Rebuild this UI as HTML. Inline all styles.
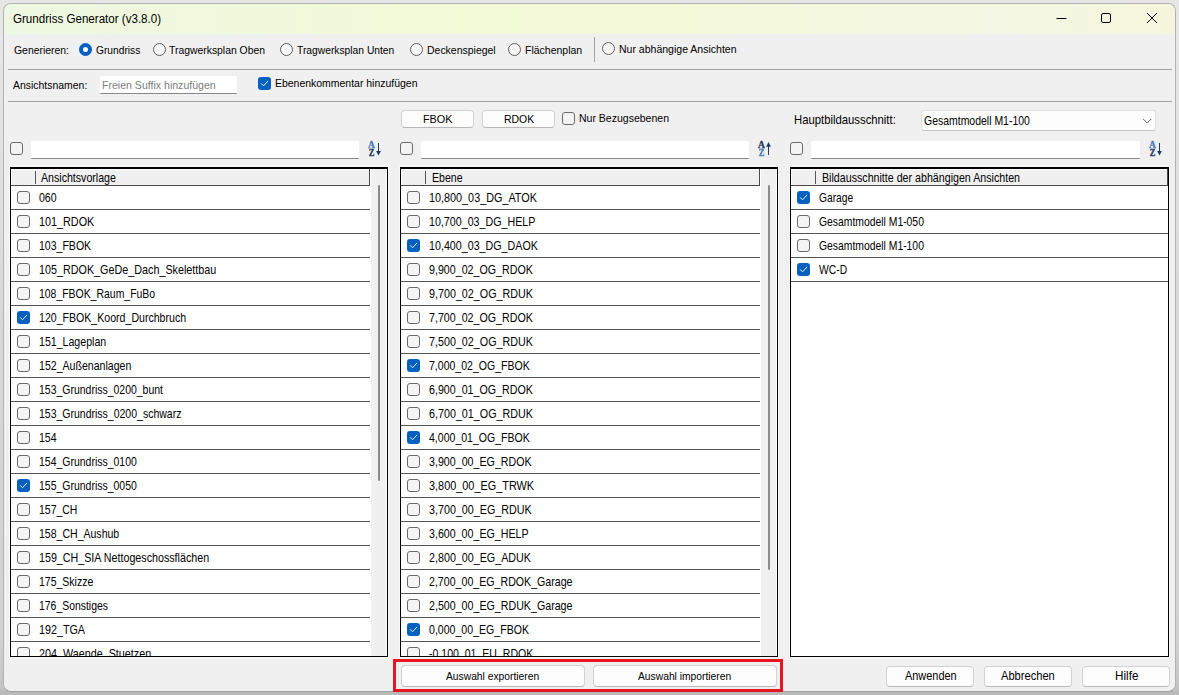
<!DOCTYPE html>
<html lang="de"><head><meta charset="utf-8"><title>Grundriss Generator (v3.8.0)</title>
<style>
html,body{margin:0;padding:0}
body{width:1179px;height:695px;overflow:hidden;position:relative;
 background:linear-gradient(to bottom,#e6e6e6 0,#e7e7e7 40px,#d9d9d9 300px,#d1d1d1 640px,#c4c4c4 688px,#bababa 692px,#bababa 695px);
 font-family:"Liberation Sans",sans-serif}
#win{position:absolute;left:3px;top:3px;width:1171px;height:687px;border:1px solid #b2b2b2;border-bottom-color:#a0a0a0;border-radius:8px;background:#f0f0f0;overflow:hidden}
#tb{position:absolute;left:0;top:0;width:1171px;height:30px;background:linear-gradient(to right,#eef7e1,#f2f9d7 40%,#f3f8d8 55%,#f3f6e2 85%,#f4f6dc)}
#c{position:absolute;left:-4px;top:-4px;width:1179px;height:695px}
.t{position:absolute;white-space:pre;line-height:16px;transform-origin:0 0;display:block}
.hl{position:absolute;height:1px;background:#a0a0a0}
.cb{position:absolute;width:11px;height:11px;border:1px solid #6a6a6a;border-radius:3px;background:#f4f4f4}
.cb.on{width:13px;height:13px;border:0;background:#0560c0}
.cb svg{display:block}
.rd{position:absolute;width:11px;height:11px;border:1px solid #5e5e5e;border-radius:50%;background:#f6f6f6}
.rd.on{width:5px;height:5px;border:4px solid #0560c0;background:#fff}
.inp{position:absolute;background:#fff;border-bottom:1px solid #868686;border-radius:2px 2px 1px 1px;box-sizing:border-box}
.btn{position:absolute;box-sizing:border-box;background:#fdfdfd;border:1px solid #d2d2d2;border-bottom-color:#b8b8b8;border-radius:4px}
.lb{position:absolute;box-sizing:border-box;border:1px solid #000;border-top-width:2px;background:#fff;overflow:hidden;box-shadow:0 0 0 1px #f9f9f9}
.hd{position:absolute;left:0;top:0;height:16px;background:#f0f0f0;border-bottom:1px solid #555;border-right:1px solid #555;box-shadow:inset 1px 1px 0 #fff}
.hs{position:absolute;width:1px;background:#555}
.rl{position:absolute;left:0;height:1px;background:#555}
.sb{position:absolute;background:#f0f0f0}
.th{position:absolute;width:2px;background:#8b8b8b;border-radius:1px}
</style></head><body>
<div id="win"><div id="tb"></div><div id="c">
<svg style="position:absolute;left:1040px;top:4px" width="132" height="30" viewBox="1040 4 132 30"><path d="M1056.5 18.5H1066.5" stroke="#000" stroke-width="1" fill="none"/><rect x="1101.5" y="13.5" width="9" height="9" rx="1.5" fill="none" stroke="#000" stroke-width="1"/><path d="M1147 13L1157 23M1157 13L1147 23" stroke="#000" stroke-width="1" fill="none"/></svg>
<span class="t" style="left:12.60px;top:10.84px;font-size:12.0px;color:#000;transform:scaleX(0.9654);">Grundriss Generator (v3.8.0)</span>
<span class="t" style="left:13.80px;top:42.02px;font-size:11.5px;color:#000;transform:scaleX(0.9056);">Generieren:</span>
<div class="rd on" style="left:79.0px;top:43.3px"></div>
<span class="t" style="left:95.80px;top:42.02px;font-size:11.5px;color:#000;transform:scaleX(0.8885);">Grundriss</span>
<div class="rd" style="left:152.9px;top:43.3px"></div>
<span class="t" style="left:169.40px;top:42.02px;font-size:11.5px;color:#000;transform:scaleX(0.9029);">Tragwerksplan Oben</span>
<div class="rd" style="left:280.1px;top:43.3px"></div>
<span class="t" style="left:297.10px;top:42.02px;font-size:11.5px;color:#000;transform:scaleX(0.8937);">Tragwerksplan Unten</span>
<div class="rd" style="left:409.5px;top:43.3px"></div>
<span class="t" style="left:426.60px;top:42.02px;font-size:11.5px;color:#000;transform:scaleX(0.9107);">Deckenspiegel</span>
<div class="rd" style="left:507.8px;top:43.3px"></div>
<span class="t" style="left:524.60px;top:42.02px;font-size:11.5px;color:#000;transform:scaleX(0.9129);">Flächenplan</span>
<div style="position:absolute;left:594px;top:37px;width:1px;height:25px;background:#a0a0a0"></div>
<div class="rd" style="left:601.6px;top:42.2px"></div>
<span class="t" style="left:619.00px;top:41.02px;font-size:11.5px;color:#000;transform:scaleX(0.9143);">Nur abhängige Ansichten</span>
<div class="hl" style="left:8px;top:69px;width:1164px"></div>
<span class="t" style="left:12.60px;top:76.52px;font-size:11.5px;color:#000;transform:scaleX(0.9080);">Ansichtsnamen:</span>
<div class="inp" style="left:100px;top:76px;width:137px;height:18px"></div>
<span class="t" style="left:101.70px;top:77.02px;font-size:11.5px;color:#7d7d7d;transform:scaleX(0.9183);">Freien Suffix hinzufügen</span>
<div class="cb on" style="left:258px;top:77px"><svg width="13" height="13" viewBox="0 0 13 13"><path d="M3.3 6.6 L5.5 8.8 L9.8 4.2" fill="none" stroke="#fff" stroke-opacity="0.95" stroke-width="0.95" stroke-linecap="round" stroke-linejoin="round"/></svg></div>
<span class="t" style="left:275.20px;top:75.02px;font-size:11.5px;color:#000;transform:scaleX(0.9097);">Ebenenkommentar hinzufügen</span>
<div class="hl" style="left:8px;top:101px;width:1164px"></div>
<div class="btn" style="left:401px;top:110px;width:73px;height:18px"></div>
<span class="t" style="left:423.20px;top:111.02px;font-size:11.5px;color:#000;transform:scaleX(0.9421);">FBOK</span>
<div class="btn" style="left:482px;top:110px;width:73px;height:18px"></div>
<span class="t" style="left:504.40px;top:111.02px;font-size:11.5px;color:#000;transform:scaleX(0.9087);">RDOK</span>
<div class="cb" style="left:562px;top:112px"></div>
<span class="t" style="left:578.90px;top:110.02px;font-size:11.5px;color:#000;transform:scaleX(0.9140);">Nur Bezugsebenen</span>
<span class="t" style="left:793.60px;top:112.03px;font-size:12.6px;color:#000;transform:scaleX(0.8975);">Hauptbildausschnitt:</span>
<div class="inp" style="left:921px;top:110px;width:235px;height:21px;background:#fdfdfd;border:1px solid #e0e0e0;border-bottom-color:#c4c4c4;border-radius:3px"></div>
<span class="t" style="left:924.20px;top:113.03px;font-size:12.6px;color:#000;transform:scaleX(0.8313);">Gesamtmodell M1-100</span>
<svg style="position:absolute;left:1142px;top:118px" width="11" height="7" viewBox="0 0 11 7"><path d="M1.2 1L5.2 5L9.2 1" fill="none" stroke="#505050" stroke-width="0.9"/></svg>
<div class="cb" style="left:10px;top:142px"></div>
<div class="inp" style="left:31px;top:141px;width:328px;height:17.5px"></div>
<svg style="position:absolute;left:367px;top:141px;overflow:visible" width="15" height="16" viewBox="0 0 15 16"><text x="1.0" y="6.9" font-family="Liberation Serif,serif" font-weight="bold" font-size="9.6" fill="#4a7ab5" stroke="#4a7ab5" stroke-width="0.3">A</text><text transform="translate(1.8,14.8) scale(0.88,1)" font-family="Liberation Serif,serif" font-weight="bold" font-size="9.6" fill="#1f3864" stroke="#1f3864" stroke-width="0.3">Z</text><path d="M11.5 2V12" stroke="#1f3864" stroke-width="1"/><path d="M9.1 10L11.5 14.4L13.9 10Z" fill="#1f3864"/></svg>
<div class="cb" style="left:400px;top:142px"></div>
<div class="inp" style="left:421px;top:141px;width:328px;height:17.5px"></div>
<svg style="position:absolute;left:757px;top:141px;overflow:visible" width="15" height="16" viewBox="0 0 15 16"><text x="1.0" y="6.9" font-family="Liberation Serif,serif" font-weight="bold" font-size="9.6" fill="#1f3864" stroke="#1f3864" stroke-width="0.3">A</text><text transform="translate(1.8,14.8) scale(0.88,1)" font-family="Liberation Serif,serif" font-weight="bold" font-size="9.6" fill="#4a7ab5" stroke="#4a7ab5" stroke-width="0.3">Z</text><path d="M11.5 14V4" stroke="#1f3864" stroke-width="1"/><path d="M9.1 5.7L11.5 1L13.9 5.7Z" fill="#1f3864"/></svg>
<div class="cb" style="left:790px;top:142px"></div>
<div class="inp" style="left:811px;top:141px;width:329px;height:17.5px"></div>
<svg style="position:absolute;left:1148px;top:141px;overflow:visible" width="15" height="16" viewBox="0 0 15 16"><text x="1.0" y="6.9" font-family="Liberation Serif,serif" font-weight="bold" font-size="9.6" fill="#4a7ab5" stroke="#4a7ab5" stroke-width="0.3">A</text><text transform="translate(1.8,14.8) scale(0.88,1)" font-family="Liberation Serif,serif" font-weight="bold" font-size="9.6" fill="#1f3864" stroke="#1f3864" stroke-width="0.3">Z</text><path d="M11.5 2V12" stroke="#1f3864" stroke-width="1"/><path d="M9.1 10L11.5 14.4L13.9 10Z" fill="#1f3864"/></svg>
<div class="lb" style="left:10px;top:167px;width:378px;height:490px"></div>
<div style="position:absolute;left:11px;top:169px;width:359px;height:17px;background:#f0f0f0;box-sizing:border-box;border-bottom:1px solid #4a4a4a;border-right:1px solid #4a4a4a;box-shadow:inset 1px 1px 0 #fff"></div>
<div class="hs" style="left:35px;top:171px;height:13px"></div>
<span class="t" style="left:41.40px;top:169.93px;font-size:12.6px;color:#000;transform:scaleX(0.8425);">Ansichtsvorlage</span>
<div class="rl" style="left:11px;top:209px;width:359px"></div>
<div class="cb" style="left:17px;top:191px"></div>
<span class="t" style="left:39.30px;top:189.93px;font-size:12.6px;transform:scaleX(0.8375)">060</span>
<div class="rl" style="left:11px;top:233px;width:359px"></div>
<div class="cb" style="left:17px;top:215px"></div>
<span class="t" style="left:39.30px;top:213.93px;font-size:12.6px;transform:scaleX(0.8586)">101_RDOK</span>
<div class="rl" style="left:11px;top:257px;width:359px"></div>
<div class="cb" style="left:17px;top:239px"></div>
<span class="t" style="left:39.30px;top:237.93px;font-size:12.6px;transform:scaleX(0.8361)">103_FBOK</span>
<div class="rl" style="left:11px;top:281px;width:359px"></div>
<div class="cb" style="left:17px;top:263px"></div>
<span class="t" style="left:39.30px;top:261.93px;font-size:12.6px;transform:scaleX(0.8556)">105_RDOK_GeDe_Dach_Skelettbau</span>
<div class="rl" style="left:11px;top:305px;width:359px"></div>
<div class="cb" style="left:17px;top:287px"></div>
<span class="t" style="left:39.30px;top:285.93px;font-size:12.6px;transform:scaleX(0.8292)">108_FBOK_Raum_FuBo</span>
<div class="rl" style="left:11px;top:329px;width:359px"></div>
<div class="cb on" style="left:17px;top:311px"><svg width="13" height="13" viewBox="0 0 13 13"><path d="M3.3 6.6 L5.5 8.8 L9.8 4.2" fill="none" stroke="#fff" stroke-opacity="0.95" stroke-width="0.95" stroke-linecap="round" stroke-linejoin="round"/></svg></div>
<span class="t" style="left:39.30px;top:309.93px;font-size:12.6px;transform:scaleX(0.8405)">120_FBOK_Koord_Durchbruch</span>
<div class="rl" style="left:11px;top:353px;width:359px"></div>
<div class="cb" style="left:17px;top:335px"></div>
<span class="t" style="left:39.30px;top:333.93px;font-size:12.6px;transform:scaleX(0.8416)">151_Lageplan</span>
<div class="rl" style="left:11px;top:377px;width:359px"></div>
<div class="cb" style="left:17px;top:359px"></div>
<span class="t" style="left:39.30px;top:357.93px;font-size:12.6px;transform:scaleX(0.8404)">152_Außenanlagen</span>
<div class="rl" style="left:11px;top:401px;width:359px"></div>
<div class="cb" style="left:17px;top:383px"></div>
<span class="t" style="left:39.30px;top:381.93px;font-size:12.6px;transform:scaleX(0.8314)">153_Grundriss_0200_bunt</span>
<div class="rl" style="left:11px;top:425px;width:359px"></div>
<div class="cb" style="left:17px;top:407px"></div>
<span class="t" style="left:39.30px;top:405.93px;font-size:12.6px;transform:scaleX(0.8336)">153_Grundriss_0200_schwarz</span>
<div class="rl" style="left:11px;top:449px;width:359px"></div>
<div class="cb" style="left:17px;top:431px"></div>
<span class="t" style="left:39.30px;top:429.93px;font-size:12.6px;transform:scaleX(0.8375)">154</span>
<div class="rl" style="left:11px;top:473px;width:359px"></div>
<div class="cb" style="left:17px;top:455px"></div>
<span class="t" style="left:39.30px;top:453.93px;font-size:12.6px;transform:scaleX(0.8315)">154_Grundriss_0100</span>
<div class="rl" style="left:11px;top:497px;width:359px"></div>
<div class="cb on" style="left:17px;top:479px"><svg width="13" height="13" viewBox="0 0 13 13"><path d="M3.3 6.6 L5.5 8.8 L9.8 4.2" fill="none" stroke="#fff" stroke-opacity="0.95" stroke-width="0.95" stroke-linecap="round" stroke-linejoin="round"/></svg></div>
<span class="t" style="left:39.30px;top:477.93px;font-size:12.6px;transform:scaleX(0.8315)">155_Grundriss_0050</span>
<div class="rl" style="left:11px;top:521px;width:359px"></div>
<div class="cb" style="left:17px;top:503px"></div>
<span class="t" style="left:39.30px;top:501.93px;font-size:12.6px;transform:scaleX(0.8308)">157_CH</span>
<div class="rl" style="left:11px;top:545px;width:359px"></div>
<div class="cb" style="left:17px;top:527px"></div>
<span class="t" style="left:39.30px;top:525.93px;font-size:12.6px;transform:scaleX(0.8360)">158_CH_Aushub</span>
<div class="rl" style="left:11px;top:569px;width:359px"></div>
<div class="cb" style="left:17px;top:551px"></div>
<span class="t" style="left:39.30px;top:549.93px;font-size:12.6px;transform:scaleX(0.8495)">159_CH_SIA Nettogeschossflächen</span>
<div class="rl" style="left:11px;top:593px;width:359px"></div>
<div class="cb" style="left:17px;top:575px"></div>
<span class="t" style="left:39.30px;top:573.93px;font-size:12.6px;transform:scaleX(0.8340)">175_Skizze</span>
<div class="rl" style="left:11px;top:617px;width:359px"></div>
<div class="cb" style="left:17px;top:599px"></div>
<span class="t" style="left:39.30px;top:597.93px;font-size:12.6px;transform:scaleX(0.8281)">176_Sonstiges</span>
<div class="rl" style="left:11px;top:641px;width:359px"></div>
<div class="cb" style="left:17px;top:623px"></div>
<span class="t" style="left:39.30px;top:621.93px;font-size:12.6px;transform:scaleX(0.8533)">192_TGA</span>
<div style="position:absolute;left:11px;top:642px;width:359px;height:14px;overflow:hidden"><div style="position:absolute;left:-11px;top:-642px">
<div class="cb" style="left:17px;top:647px"></div>
<span class="t" style="left:39.30px;top:645.93px;font-size:12.6px;transform:scaleX(0.8554)">204_Waende_Stuetzen</span>
</div></div>
<div class="sb" style="left:371px;top:169px;width:15px;height:487px"></div>
<div class="th" style="left:378px;top:185px;height:296px"></div>
<div class="lb" style="left:400px;top:167px;width:378px;height:490px"></div>
<div style="position:absolute;left:401px;top:169px;width:359px;height:17px;background:#f0f0f0;box-sizing:border-box;border-bottom:1px solid #4a4a4a;border-right:1px solid #4a4a4a;box-shadow:inset 1px 1px 0 #fff"></div>
<div class="hs" style="left:425px;top:171px;height:13px"></div>
<span class="t" style="left:431.60px;top:169.93px;font-size:12.6px;color:#000;transform:scaleX(0.8374);">Ebene</span>
<div class="rl" style="left:401px;top:209px;width:359px"></div>
<div class="cb" style="left:407px;top:191px"></div>
<span class="t" style="left:429.30px;top:189.93px;font-size:12.6px;transform:scaleX(0.8593)">10,800_03_DG_ATOK</span>
<div class="rl" style="left:401px;top:233px;width:359px"></div>
<div class="cb" style="left:407px;top:215px"></div>
<span class="t" style="left:429.30px;top:213.93px;font-size:12.6px;transform:scaleX(0.8489)">10,700_03_DG_HELP</span>
<div class="rl" style="left:401px;top:257px;width:359px"></div>
<div class="cb on" style="left:407px;top:239px"><svg width="13" height="13" viewBox="0 0 13 13"><path d="M3.3 6.6 L5.5 8.8 L9.8 4.2" fill="none" stroke="#fff" stroke-opacity="0.95" stroke-width="0.95" stroke-linecap="round" stroke-linejoin="round"/></svg></div>
<span class="t" style="left:429.30px;top:237.93px;font-size:12.6px;transform:scaleX(0.8500)">10,400_03_DG_DAOK</span>
<div class="rl" style="left:401px;top:281px;width:359px"></div>
<div class="cb" style="left:407px;top:263px"></div>
<span class="t" style="left:429.30px;top:261.93px;font-size:12.6px;transform:scaleX(0.8481)">9,900_02_OG_RDOK</span>
<div class="rl" style="left:401px;top:305px;width:359px"></div>
<div class="cb" style="left:407px;top:287px"></div>
<span class="t" style="left:429.30px;top:285.93px;font-size:12.6px;transform:scaleX(0.8530)">9,700_02_OG_RDUK</span>
<div class="rl" style="left:401px;top:329px;width:359px"></div>
<div class="cb" style="left:407px;top:311px"></div>
<span class="t" style="left:429.30px;top:309.93px;font-size:12.6px;transform:scaleX(0.8481)">7,700_02_OG_RDOK</span>
<div class="rl" style="left:401px;top:353px;width:359px"></div>
<div class="cb" style="left:407px;top:335px"></div>
<span class="t" style="left:429.30px;top:333.93px;font-size:12.6px;transform:scaleX(0.8530)">7,500_02_OG_RDUK</span>
<div class="rl" style="left:401px;top:377px;width:359px"></div>
<div class="cb on" style="left:407px;top:359px"><svg width="13" height="13" viewBox="0 0 13 13"><path d="M3.3 6.6 L5.5 8.8 L9.8 4.2" fill="none" stroke="#fff" stroke-opacity="0.95" stroke-width="0.95" stroke-linecap="round" stroke-linejoin="round"/></svg></div>
<span class="t" style="left:429.30px;top:357.93px;font-size:12.6px;transform:scaleX(0.8362)">7,000_02_OG_FBOK</span>
<div class="rl" style="left:401px;top:401px;width:359px"></div>
<div class="cb" style="left:407px;top:383px"></div>
<span class="t" style="left:429.30px;top:381.93px;font-size:12.6px;transform:scaleX(0.8481)">6,900_01_OG_RDOK</span>
<div class="rl" style="left:401px;top:425px;width:359px"></div>
<div class="cb" style="left:407px;top:407px"></div>
<span class="t" style="left:429.30px;top:405.93px;font-size:12.6px;transform:scaleX(0.8530)">6,700_01_OG_RDUK</span>
<div class="rl" style="left:401px;top:449px;width:359px"></div>
<div class="cb on" style="left:407px;top:431px"><svg width="13" height="13" viewBox="0 0 13 13"><path d="M3.3 6.6 L5.5 8.8 L9.8 4.2" fill="none" stroke="#fff" stroke-opacity="0.95" stroke-width="0.95" stroke-linecap="round" stroke-linejoin="round"/></svg></div>
<span class="t" style="left:429.30px;top:429.93px;font-size:12.6px;transform:scaleX(0.8371)">4,000_01_OG_FBOK</span>
<div class="rl" style="left:401px;top:473px;width:359px"></div>
<div class="cb" style="left:407px;top:455px"></div>
<span class="t" style="left:429.30px;top:453.93px;font-size:12.6px;transform:scaleX(0.8479)">3,900_00_EG_RDOK</span>
<div class="rl" style="left:401px;top:497px;width:359px"></div>
<div class="cb" style="left:407px;top:479px"></div>
<span class="t" style="left:429.30px;top:477.93px;font-size:12.6px;transform:scaleX(0.8645)">3,800_00_EG_TRWK</span>
<div class="rl" style="left:401px;top:521px;width:359px"></div>
<div class="cb" style="left:407px;top:503px"></div>
<span class="t" style="left:429.30px;top:501.93px;font-size:12.6px;transform:scaleX(0.8528)">3,700_00_EG_RDUK</span>
<div class="rl" style="left:401px;top:545px;width:359px"></div>
<div class="cb" style="left:407px;top:527px"></div>
<span class="t" style="left:429.30px;top:525.93px;font-size:12.6px;transform:scaleX(0.8466)">3,600_00_EG_HELP</span>
<div class="rl" style="left:401px;top:569px;width:359px"></div>
<div class="cb" style="left:407px;top:551px"></div>
<span class="t" style="left:429.30px;top:549.93px;font-size:12.6px;transform:scaleX(0.8519)">2,800_00_EG_ADUK</span>
<div class="rl" style="left:401px;top:593px;width:359px"></div>
<div class="cb" style="left:407px;top:575px"></div>
<span class="t" style="left:429.30px;top:573.93px;font-size:12.6px;transform:scaleX(0.8434)">2,700_00_EG_RDOK_Garage</span>
<div class="rl" style="left:401px;top:617px;width:359px"></div>
<div class="cb" style="left:407px;top:599px"></div>
<span class="t" style="left:429.30px;top:597.93px;font-size:12.6px;transform:scaleX(0.8469)">2,500_00_EG_RDUK_Garage</span>
<div class="rl" style="left:401px;top:641px;width:359px"></div>
<div class="cb on" style="left:407px;top:623px"><svg width="13" height="13" viewBox="0 0 13 13"><path d="M3.3 6.6 L5.5 8.8 L9.8 4.2" fill="none" stroke="#fff" stroke-opacity="0.95" stroke-width="0.95" stroke-linecap="round" stroke-linejoin="round"/></svg></div>
<span class="t" style="left:429.30px;top:621.93px;font-size:12.6px;transform:scaleX(0.8401)">0,000_00_EG_FBOK</span>
<div style="position:absolute;left:401px;top:642px;width:359px;height:14px;overflow:hidden"><div style="position:absolute;left:-401px;top:-642px">
<div class="cb" style="left:407px;top:647px"></div>
<span class="t" style="left:429.30px;top:645.93px;font-size:12.6px;transform:scaleX(0.8370)">-0,100_01_EU_RDOK</span>
</div></div>
<div class="sb" style="left:761px;top:169px;width:15px;height:487px"></div>
<div class="th" style="left:768px;top:185px;height:385px"></div>
<div class="lb" style="left:790px;top:167px;width:379px;height:490px"></div>
<div style="position:absolute;left:791px;top:169px;width:377px;height:17px;background:#f0f0f0;box-sizing:border-box;border-bottom:1px solid #4a4a4a;border-right:1px solid #4a4a4a;box-shadow:inset 1px 1px 0 #fff"></div>
<div class="hs" style="left:815px;top:171px;height:13px"></div>
<span class="t" style="left:821.70px;top:169.93px;font-size:12.6px;color:#000;transform:scaleX(0.8467);">Bildausschnitte der abhängigen Ansichten</span>
<div class="rl" style="left:791px;top:209px;width:377px"></div>
<div class="cb on" style="left:797px;top:191px"><svg width="13" height="13" viewBox="0 0 13 13"><path d="M3.3 6.6 L5.5 8.8 L9.8 4.2" fill="none" stroke="#fff" stroke-opacity="0.95" stroke-width="0.95" stroke-linecap="round" stroke-linejoin="round"/></svg></div>
<span class="t" style="left:819.30px;top:189.93px;font-size:12.6px;transform:scaleX(0.8140)">Garage</span>
<div class="rl" style="left:791px;top:233px;width:377px"></div>
<div class="cb" style="left:797px;top:215px"></div>
<span class="t" style="left:819.30px;top:213.93px;font-size:12.6px;transform:scaleX(0.8235)">Gesamtmodell M1-050</span>
<div class="rl" style="left:791px;top:257px;width:377px"></div>
<div class="cb" style="left:797px;top:239px"></div>
<span class="t" style="left:819.30px;top:237.93px;font-size:12.6px;transform:scaleX(0.8235)">Gesamtmodell M1-100</span>
<div class="rl" style="left:791px;top:281px;width:377px"></div>
<div class="cb on" style="left:797px;top:263px"><svg width="13" height="13" viewBox="0 0 13 13"><path d="M3.3 6.6 L5.5 8.8 L9.8 4.2" fill="none" stroke="#fff" stroke-opacity="0.95" stroke-width="0.95" stroke-linecap="round" stroke-linejoin="round"/></svg></div>
<span class="t" style="left:819.30px;top:261.93px;font-size:12.6px;transform:scaleX(0.8197)">WC-D</span>
<div class="btn" style="left:401px;top:665px;width:184px;height:22px"></div>
<span class="t" style="left:445.60px;top:668.02px;font-size:11.5px;color:#000;transform:scaleX(0.8944);">Auswahl exportieren</span>
<div class="btn" style="left:593px;top:665px;width:184px;height:22px"></div>
<span class="t" style="left:637.70px;top:668.02px;font-size:11.5px;color:#000;transform:scaleX(0.8945);">Auswahl importieren</span>
<div class="btn" style="left:886px;top:666px;width:88px;height:21px"></div>
<span class="t" style="left:904.60px;top:668.03px;font-size:12.6px;color:#000;transform:scaleX(0.8668);">Anwenden</span>
<div class="btn" style="left:984px;top:666px;width:88px;height:21px"></div>
<span class="t" style="left:1001.40px;top:668.03px;font-size:12.6px;color:#000;transform:scaleX(0.8831);">Abbrechen</span>
<div class="btn" style="left:1082px;top:666px;width:88px;height:21px"></div>
<span class="t" style="left:1115.10px;top:668.03px;font-size:12.6px;color:#000;transform:scaleX(0.9285);">Hilfe</span>
</div></div>
<div style="position:absolute;left:393px;top:659px;width:384px;height:27px;border:3px solid #e8141f"></div>
</body></html>
